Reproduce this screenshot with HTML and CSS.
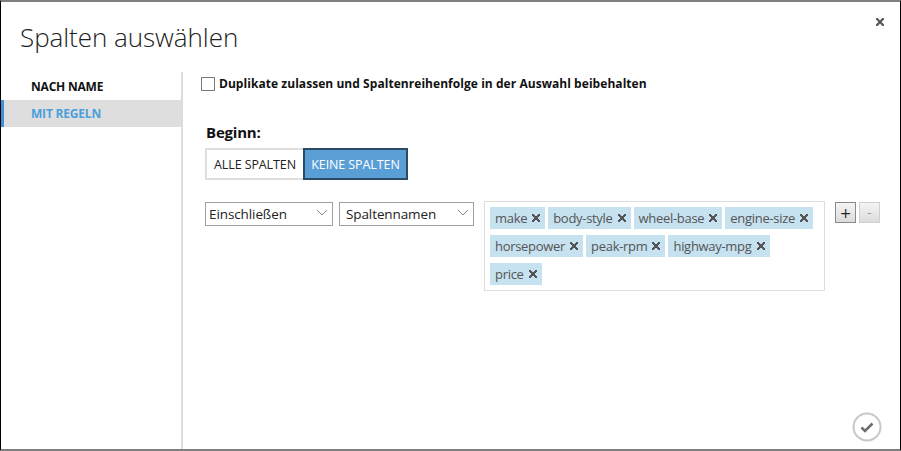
FILE: index.html
```html
<!DOCTYPE html>
<html lang="de">
<head>
<meta charset="utf-8">
<title>Spalten auswählen</title>
<link rel="stylesheet" href="styles.css">
</head>
<body>
<div class="dialog">
  <button class="close" aria-label="Schließen">
    <svg width="8" height="8" viewBox="0 0 8 8"><path d="M1 1L7 7M7 1L1 7" stroke="#555" stroke-width="2.2" stroke-linecap="square"/></svg>
  </button>
  <h1 class="title">Spalten auswählen</h1>
  <div class="main">
    <nav class="nav">
      <div class="nav-item">NACH NAME</div>
      <div class="nav-item active">MIT REGELN</div>
    </nav>
    <section class="content">
      <label class="check-row"><span class="checkbox"></span>Duplikate zulassen und Spaltenreihenfolge in der Auswahl beibehalten</label>
      <div class="begin-label">Beginn:</div>
      <div class="btn-group">
        <button class="seg">ALLE SPALTEN</button>
        <button class="seg selected">KEINE SPALTEN</button>
      </div>
      <div class="rule-row">
        <div class="select sel-1">Einschließen<svg class="chev" width="12" height="7" viewBox="0 0 12 7"><path d="M1 1L6 6L11 1" fill="none" stroke="#888" stroke-width="1"/></svg></div>
        <div class="select sel-2">Spaltennamen<svg class="chev" width="12" height="7" viewBox="0 0 12 7"><path d="M1 1L6 6L11 1" fill="none" stroke="#888" stroke-width="1"/></svg></div>
        <div class="tags">
          <span class="tag">make<i class="x"></i></span>
          <span class="tag">body-style<i class="x"></i></span>
          <span class="tag">wheel-base<i class="x"></i></span>
          <span class="tag">engine-size<i class="x"></i></span>
          <span class="tag">horsepower<i class="x"></i></span>
          <span class="tag">peak-rpm<i class="x"></i></span>
          <span class="tag">highway-mpg<i class="x"></i></span>
          <span class="tag">price<i class="x"></i></span>
        </div>
        <div class="pm">
          <button class="pm-btn plus">+</button>
          <button class="pm-btn minus">-</button>
        </div>
      </div>
    </section>
  </div>
  <button class="ok" aria-label="OK">
    <svg width="30" height="30" viewBox="0 0 30 30"><circle cx="15" cy="15" r="13.5" fill="#fff" stroke="#c8c8c8" stroke-width="2"/><path d="M9.5 15.5L13 19L20.5 11.5" fill="none" stroke="#6e6e6e" stroke-width="2.6"/></svg>
  </button>
</div>
</body>
</html>
```
FILE: styles.css
```css
* { box-sizing: border-box; }
html, body { margin: 0; padding: 0; background: #fff; }
body { font-family: "Open Sans", "Noto Sans", sans-serif; color: #000; }

.dialog {
  position: relative;
  width: 901px;
  height: 451px;
  border-top: 2px solid #7f7f7f;
  border-bottom: 2px solid #7f7f7f;
  border-left: 1px solid #000;
  border-right: 1px solid #000;
  display: flex;
  flex-direction: column;
  overflow: hidden;
}

.close {
  position: absolute;
  top: 16px;
  right: 16px;
  border: 0;
  background: none;
  padding: 0;
  width: 8px;
  height: 8px;
  display: flex;
}

.title {
  margin: 0;
  padding: 18px 0 0 19px;
  height: 70px;
  font-weight: 300;
  font-size: 26px;
  letter-spacing: -0.05px;
  line-height: 34px;
  color: #222;
}

.main {
  flex: 1;
  display: flex;
}

.nav {
  width: 182px;
  border-right: 2px solid #dcdcdc;
  padding-top: 1px;
}

.nav-item {
  height: 27px;
  padding-left: 30px;
  display: flex;
  align-items: center;
  font-size: 12px;
  font-weight: 700;
  letter-spacing: -0.2px;
  color: #111;
}
.nav-item.active {
  background: #dedede;
  color: #4c9edc;
  border-left: 3px solid #3e8fd4;
  padding-left: 27px;
  height: 27px;
}

.content {
  flex: 1;
  padding: 4px 0 0 18px;
}

.check-row {
  display: flex;
  align-items: center;
  font-size: 12px;
  font-weight: 700;
  letter-spacing: 0.05px;
  height: 15px;
  color: #111;
}
.checkbox {
  width: 14px;
  height: 14px;
  border: 1px solid #7a7a7a;
  background: #fff;
  margin-right: 4px;
}

.begin-label {
  margin-top: 31px;
  margin-left: 5px;
  font-size: 15px;
  font-weight: 700;
  letter-spacing: -0.2px;
  line-height: 20px;
  color: #111;
}

.btn-group {
  display: flex;
  margin-top: 6px;
  margin-left: 4px;
}
.seg {
  height: 32px;
  font-family: inherit;
  font-size: 12.5px;
  letter-spacing: -0.1px;
  border: 2px solid #dedede;
  background: #fff;
  color: #222;
  padding: 0;
}
.seg.selected {
  background: #5a9ed6;
  color: #fff;
  border: 2px solid #2a4a65;
}
.seg:first-child { width: 98px; border-right: 0; }
.seg.selected { width: 105px; }

.rule-row {
  display: flex;
  align-items: flex-start;
  margin-top: 21px;
  margin-left: 4px;
}

.select {
  height: 24px;
  border: 1px solid #a0a0a0;
  display: flex;
  align-items: center;
  justify-content: space-between;
  font-size: 13.5px;
  letter-spacing: -0.1px;
  color: #222;
  padding: 0 4px 0 3px;
  margin-top: 1px;
}
.sel-1 { width: 128px; margin-right: 6px; }
.sel-2 { width: 135px; padding-left: 6px; margin-right: 10px; }
.chev { margin-bottom: 4px; }

.tags {
  width: 341px;
  height: 90px;
  border: 1px solid #dddddd;
  padding: 5px 8px 0 5px;
  display: flex;
  flex-wrap: wrap;
  align-content: flex-start;
  gap: 6px 3px;
}
.tag {
  height: 22px;
  background: #c6e1ef;
  color: #555;
  font-size: 13px;
  letter-spacing: -0.3px;
  padding: 0 5px 0 5px;
  display: flex;
  align-items: center;
}
.x {
  width: 8px;
  height: 8px;
  margin-left: 5px;
  background:
    linear-gradient(45deg, transparent 38%, #555 38%, #555 62%, transparent 62%),
    linear-gradient(-45deg, transparent 38%, #555 38%, #555 62%, transparent 62%);
}

.pm {
  display: flex;
  gap: 3px;
  margin-left: 10px;
  margin-top: 1px;
}
.pm-btn {
  width: 21px;
  height: 21px;
  padding: 0;
  font-family: "DejaVu Sans", sans-serif;
  font-size: 14px;
  line-height: 18px;
  background: linear-gradient(#f4f4f4, #dcdcdc);
  color: #222;
}
.plus { border: 1px solid #8a8a8a; }
.minus { border: 1px solid #cfcfcf; color: #999; font-size: 12px; }

.ok {
  position: absolute;
  right: 18px;
  bottom: 7px;
  border: 0;
  background: none;
  padding: 0;
  width: 30px;
  height: 30px;
}
```
